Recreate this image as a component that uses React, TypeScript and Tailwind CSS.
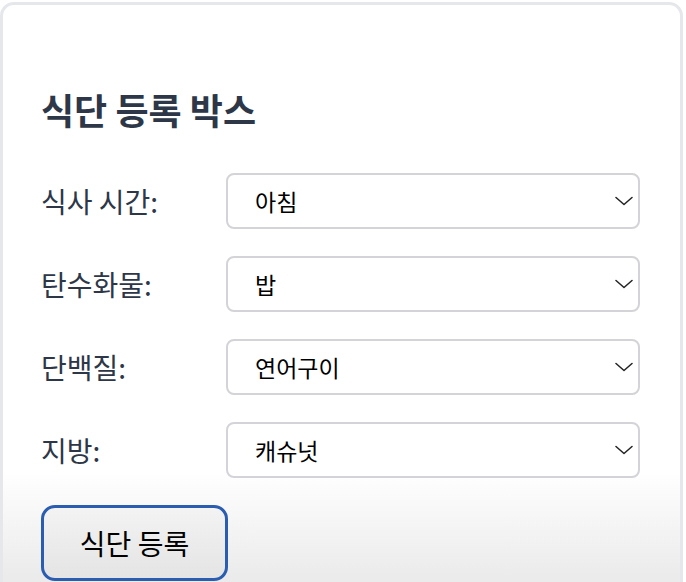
import { useState } from "react";

const font = { fontFamily: '"Noto Sans CJK KR", "Noto Sans", sans-serif' };

const Chevron = () => (
  <svg width="18" height="10" viewBox="0 0 18 10" fill="none" className="text-[#222]">
    <polyline points="1,1.5 9,8.5 17,1.5" stroke="currentColor" strokeWidth="1.5" strokeLinecap="round" strokeLinejoin="round" />
  </svg>
);

const Field = ({ label, value }: { label: string; value: string }) => {
  return (
    <div className="flex flex-row items-center">
      <label className="w-[185px] text-[28px] text-[#2d3748] leading-none">{label}</label>
      <div className="flex flex-row items-center justify-between w-[414px] h-[56px] border-2 border-[#d4d4d8] rounded-[8px] bg-white pl-[27px] pr-[5px]">
        <span className="text-[23px] text-black leading-none">{value}</span>
        <Chevron />
      </div>
    </div>
  );
};

export default function App() {
  const [fields] = useState([
    { label: "식사 시간:", value: "아침" },
    { label: "탄수화물:", value: "밥" },
    { label: "단백질:", value: "연어구이" },
    { label: "지방:", value: "캐슈넛" },
  ]);

  return (
    <div className="w-[686px] h-[582px] overflow-hidden bg-white" style={font}>
      <div className="mt-[2px] w-[683px] h-[620px] border-[3px] border-[#e5e7eb] rounded-[14px] bg-[linear-gradient(to_bottom,#ffffff_76%,#ebebeb_93%)] pl-[38px] pt-[86px]">
        <h2 className="text-[36px] font-semibold text-[#2d3748] leading-none">식단 등록 박스</h2>
        <div className="flex flex-col gap-[27px] mt-[46px]">
          {fields.map((f, i) => (
            <Field key={i} label={f.label} value={f.value} />
          ))}
        </div>
        <button className="mt-[27px] w-[187px] h-[76px] border-[3px] border-[#2a5db0] rounded-[14px] bg-[linear-gradient(to_bottom,#f3f3f3,#e4e4e4)] text-[28px] text-black leading-none">
          식단 등록
        </button>
      </div>
    </div>
  );
}
